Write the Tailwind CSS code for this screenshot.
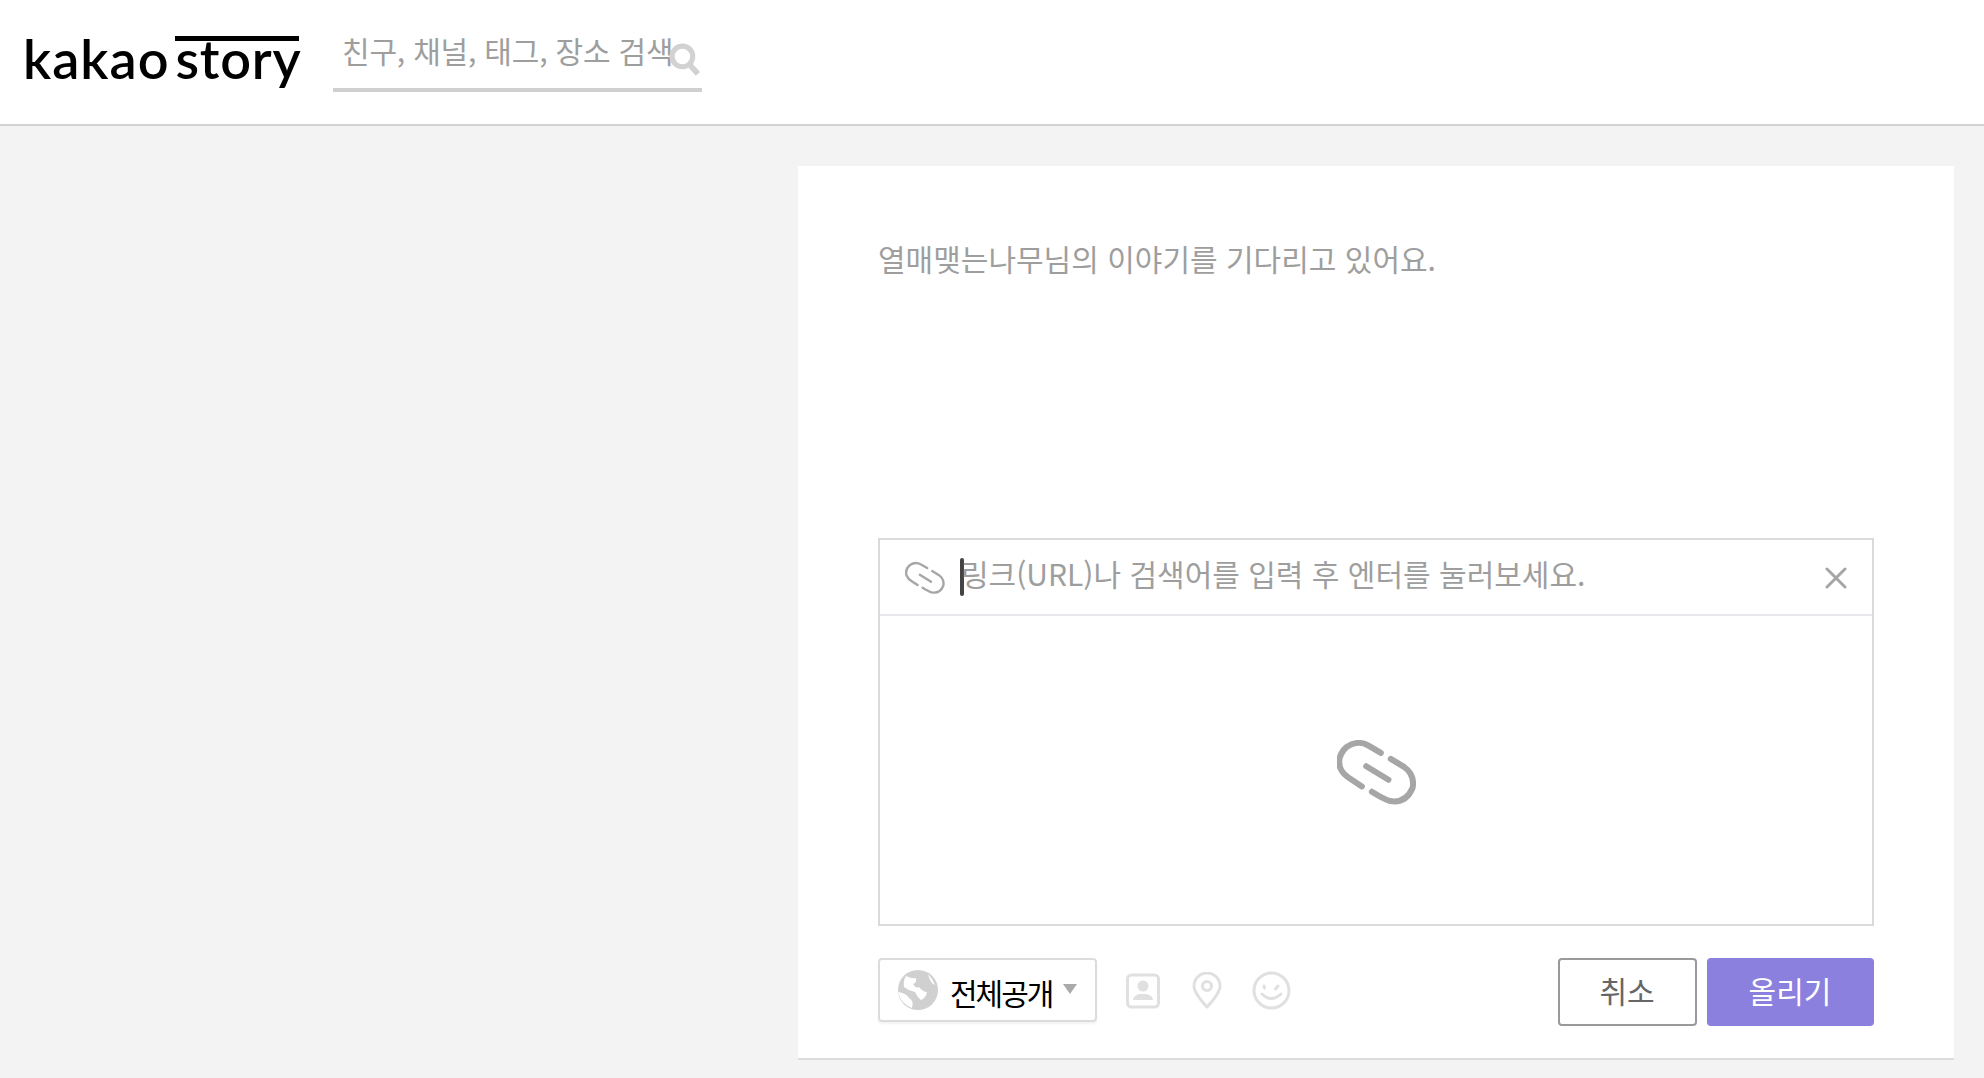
<!DOCTYPE html>
<html lang="ko">
<head>
  <meta charset="UTF-8" />
  <meta name="viewport" content="width=device-width, initial-scale=1.0" />
  <title>kakaostory</title>
  <script src="https://cdn.jsdelivr.net/npm/@tailwindcss/browser@4"></script>
</head>
<body class="bg-[#f3f3f3] h-[1078px] overflow-hidden flex flex-col font-['Noto_Sans_CJK_KR','Noto_Sans',sans-serif]">
  <!-- header -->
  <header class="h-[126px] shrink-0 bg-white border-b-2 border-[#d2d2d2] flex items-start pl-[23px]">
    <div class="w-[278px] h-[88px] mt-[36px] flex items-start font-['Lato',sans-serif] font-semibold text-black text-[54px] leading-[50px]">
      <span class="-mt-[2px] tracking-[1px]">kakao</span>
      <div class="ml-[6px] border-t-[5px] border-black w-[124px] h-[50px]">
        <span class="block -mt-[7px] tracking-[0.8px]">story</span>
      </div>
    </div>
    <div class="relative ml-[32px] mt-[30px] w-[369px] h-[62px] border-b-4 border-[#d0d0d0] pl-[9px] text-[30px] leading-[40px] tracking-[-0.2px] text-[#9e9e9e] whitespace-nowrap">
      친구, 채널, 태그, 장소 검색
      <svg class="absolute left-[336px] top-[13px]" width="32" height="33" viewBox="0 0 31 32" fill="none" stroke="#d2d2d2" stroke-width="5">
        <circle cx="13" cy="13" r="10"></circle>
        <path d="M20 21 L28 30" stroke-width="5.5"></path>
      </svg>
    </div>
  </header>

  <!-- story write card -->
  <main class="flex justify-end pr-[30px] pt-[40px]">
    <section class="w-[1156px] h-[894px] bg-white border-b-2 border-[#dcdcdc] px-[80px]">
      <p class="pt-[70px] h-[372px] text-[30px] leading-[44px] text-[#9e9e9e]">열매맺는나무님의 이야기를 기다리고 있어요.</p>

      <div class="w-[996px] h-[388px] border-2 border-[#dadada] flex flex-col">
        <div class="h-[76px] shrink-0 border-b-2 border-[#e8e8ec] flex items-center pl-[25px] pr-[25px]">
          <svg width="40" height="34" viewBox="110 118 238 196" fill="none" stroke="#a6a6a6" stroke-width="14" stroke-linecap="round" class="mt-[2px]">
            <path d="M242 157 L205 135 Q172 116 138 140 Q108 168 120 203 Q128 222 150 235 L185 258"></path>
            <path d="M272 175 L312 199 Q345 222 338 262 Q318 310 270 302 Q250 296 215 274"></path>
            <path d="M198 197 L265 238"></path>
          </svg>
          <div class="w-[4px] h-[38px] bg-[#444] rounded-sm ml-[15px] -mt-[1px]"></div>
          <span class="-ml-[3px] text-[30px] leading-[44px] text-[#9e9e9e] -mt-[8px] whitespace-nowrap">링크(URL)나 검색어를 입력 후 엔터를 눌러보세요.</span>
          <svg class="ml-auto mt-[2px]" width="22" height="22" viewBox="0 0 22 22" fill="none" stroke="#a6a6a6" stroke-width="3" stroke-linecap="round">
            <path d="M2 2 L20 20 M20 2 L2 20"></path>
          </svg>
        </div>
        <div class="flex-1 flex items-center justify-center">
          <svg class="mt-[5px]" width="79" height="65" viewBox="110 118 238 196" fill="none" stroke="#a6a6a6" stroke-width="18" stroke-linecap="round">
            <path d="M242 157 L205 135 Q172 116 138 140 Q108 168 120 203 Q128 222 150 235 L185 258"></path>
            <path d="M272 175 L312 199 Q345 222 338 262 Q318 310 270 302 Q250 296 215 274"></path>
            <path d="M198 197 L265 238"></path>
          </svg>
        </div>
      </div>

      <div class="mt-[32px] flex items-start">
        <button class="w-[219px] h-[64px] border-2 border-[#dcdcdc] rounded-[4px] shadow-[0_2px_2px_rgba(0,0,0,0.05)] flex items-center pl-[18px]">
          <svg width="40" height="40" viewBox="0 0 40 40">
            <circle cx="20" cy="20" r="20" fill="#d0d0d0"></circle>
            <path d="M8 6 Q14 9 18 8 Q19 13 15 14 Q18 19 21 17 Q25 22 29 22 Q28 28 23 30 Q19 27 17 22 Q11 21 6 17 Q5 11 8 6 Z" fill="#fff"></path>
            <path d="M0 22 Q8 23 11 28 Q16 30 14 38 Q3 34 0 22 Z" fill="#fff"></path>
            <path d="M30 4 Q35 9 37 15 Q32 13 30 4 Z" fill="#fff"></path>
          </svg>
          <span class="ml-[12px] mt-[3px] text-[30px] leading-[44px] tracking-[-2px] text-black">전체공개</span>
          <svg class="ml-[11px] -mt-[2px]" width="14" height="10" viewBox="0 0 14 10"><path d="M0 0 H14 L7 10 Z" fill="#aaa"></path></svg>
        </button>

        <div class="ml-[29px] mt-[13px] flex items-center">
          <svg width="34" height="36" viewBox="0 0 34 36" fill="none">
            <rect x="1.5" y="2" width="31" height="32" rx="4" stroke="#e0e0e0" stroke-width="3"></rect>
            <circle cx="17" cy="13" r="5.5" fill="#e0e0e0"></circle>
            <path d="M7 27 Q7 23 13 21 L21 21 Q27 23 27 27 Z" fill="#e0e0e0"></path>
          </svg>
          <svg class="ml-[32px]" width="30" height="37" viewBox="0 0 30 37" fill="none" stroke="#e0e0e0" stroke-width="3">
            <path d="M15 35 Q2 21 2 14 A13 13 0 0 1 28 14 Q28 21 15 35 Z" stroke-linejoin="round"></path>
            <circle cx="15" cy="14" r="4.5"></circle>
          </svg>
          <svg class="ml-[30px]" width="39" height="39" viewBox="0 0 39 39" fill="none" stroke="#e0e0e0" stroke-width="3" stroke-linecap="round">
            <circle cx="19.5" cy="19.5" r="17.5"></circle>
            <path d="M12 15 L12.5 17 M26 15 L23.5 18"></path>
            <path d="M10 23 Q19 32 29 23"></path>
          </svg>
        </div>

        <button class="ml-auto w-[139px] h-[68px] border-2 border-[#999] rounded-[4px] text-[30px] text-[#666] flex items-center justify-center pb-[4px] pr-[1px]">취소</button>
        <button class="ml-[10px] w-[167px] h-[68px] bg-[#8b80de] rounded-[4px] text-[30px] text-white flex items-center justify-center pb-[3px] pr-[1px]">올리기</button>
      </div>
    </section>
  </main>
</body>
</html>
